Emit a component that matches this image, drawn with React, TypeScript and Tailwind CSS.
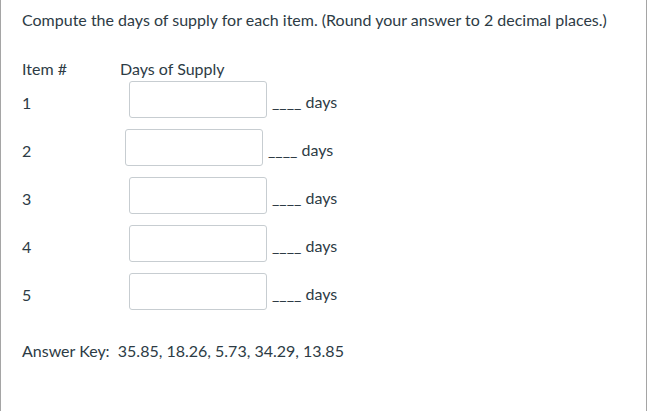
import React from 'react'

const rows = [
  { id: 1, shift: 'ml-[9px]' },
  { id: 2, shift: 'ml-[5px]' },
  { id: 3, shift: 'ml-[9px]' },
  { id: 4, shift: 'ml-[9px]' },
  { id: 5, shift: 'ml-[9px]' },
]

export default function App() {
  return (
    <div className="w-[650px] h-[411px] bg-white">
      <div
        className="w-[647px] h-[411px] border-x border-[#a5a5a5] text-[#2d3b45] text-[16px] px-[21px] pt-[10px]"
        style={{ fontFamily: 'Lato, "Noto Sans", sans-serif' }}
      >
        <p className="leading-[20px]">
          Compute the days of supply for each item. (Round your answer to 2 decimal places.)
        </p>

        <div className="mt-[29px] flex leading-[20px]">
          <div className="w-[98px]">Item #</div>
          <div>Days of Supply</div>
        </div>

        <div className="mt-[3px] flex flex-col gap-[12px]">
          {rows.map((r) => (
            <div key={r.id} className="flex items-end h-[36px]">
              <div className="w-[98px] leading-[20px] pb-[5px]">{r.id}</div>
              <div className={`flex items-end ${r.shift}`}>
                <input
                  type="text"
                  className="w-[138px] h-[37px] border border-[#c7cdd1] rounded-[3px] bg-white outline-none"
                />
                <span className="ml-[5px] leading-[20px] pb-[6px]">____ days</span>
              </div>
            </div>
          ))}
        </div>

        <p className="mt-[31px] leading-[20px]">Answer Key:&nbsp; 35.85, 18.26, 5.73, 34.29, 13.85</p>
      </div>
    </div>
  )
}
